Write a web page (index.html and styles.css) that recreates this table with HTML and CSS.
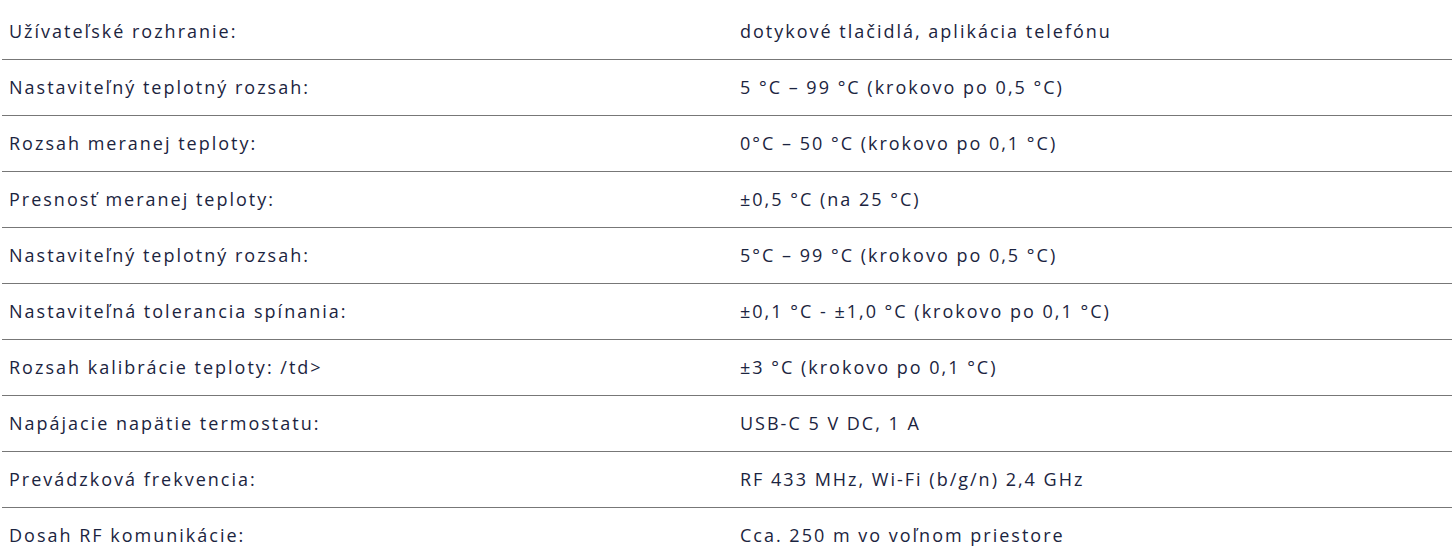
FILE: index.html
```html
<!DOCTYPE html>
<html lang="sk">
<head>
<meta charset="utf-8">
<link rel="stylesheet" href="styles.css">
</head>
<body>
<div class="wrap">
<table class="spec">
<tbody>
<tr><td>Užívateľské rozhranie:</td><td>dotykové tlačidlá, aplikácia telefónu</td></tr>
<tr><td>Nastaviteľný teplotný rozsah:</td><td>5 °C – 99 °C (krokovo po 0,5 °C)</td></tr>
<tr><td>Rozsah meranej teploty:</td><td>0°C – 50 °C (krokovo po 0,1 °C)</td></tr>
<tr><td>Presnosť meranej teploty:</td><td>±0,5 °C (na 25 °C)</td></tr>
<tr><td>Nastaviteľný teplotný rozsah:</td><td>5°C – 99 °C (krokovo po 0,5 °C)</td></tr>
<tr><td>Nastaviteľná tolerancia spínania:</td><td>±0,1 °C - ±1,0 °C (krokovo po 0,1 °C)</td></tr>
<tr><td>Rozsah kalibrácie teploty: /td&gt;</td><td>±3 °C (krokovo po 0,1 °C)</td></tr>
<tr><td>Napájacie napätie termostatu:</td><td>USB-C 5 V DC, 1 A</td></tr>
<tr><td>Prevádzková frekvencia:</td><td>RF 433 MHz, Wi-Fi (b/g/n) 2,4 GHz</td></tr>
<tr><td>Dosah RF komunikácie:</td><td>Cca. 250 m vo voľnom priestore</td></tr>
</tbody>
</table>
</div>
</body>
</html>
```

FILE: styles.css
```css
html, body {
  margin: 0;
  padding: 0;
  background: #ffffff;
}
.wrap {
  padding: 4px 0 0 2px;
}
.spec {
  border-collapse: collapse;
  width: 1460px;
  font-family: "Open Sans", "DejaVu Sans", sans-serif;
  font-size: 18px;
  line-height: 24px;
  letter-spacing: 2px;
  color: #1b2440;
}
.spec td {
  padding: 15px 7px 16px;
  vertical-align: middle;
  border-bottom: 1px solid #777777;
}
.spec td:first-child {
  width: 717px;
}
```
